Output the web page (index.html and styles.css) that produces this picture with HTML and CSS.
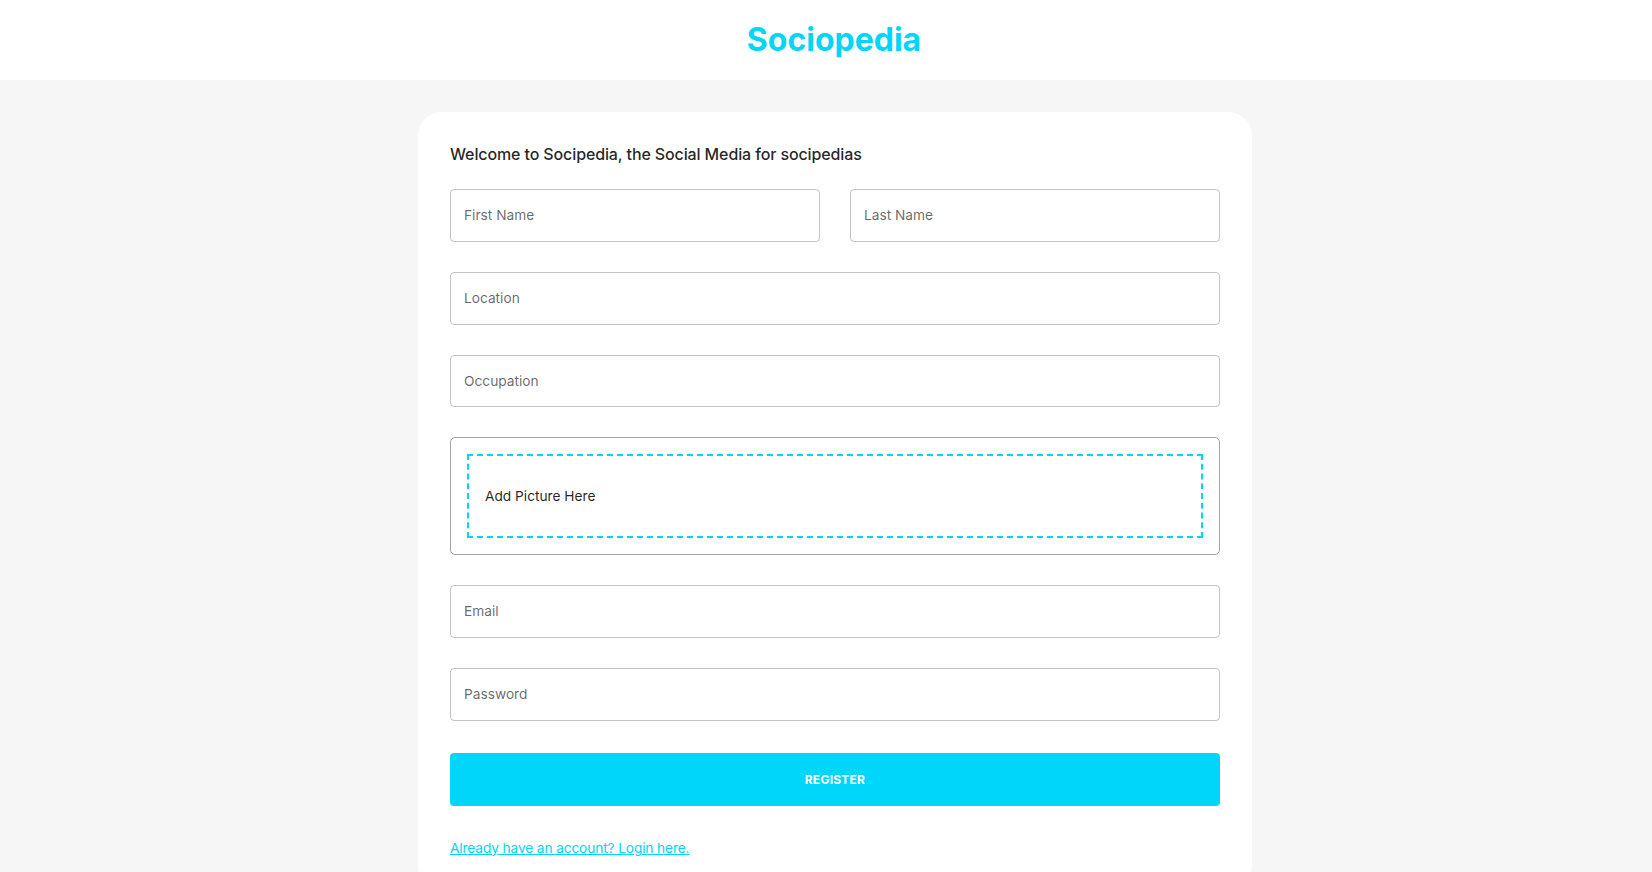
FILE: index.html
```html
<!DOCTYPE html>
<html lang="en">
<head>
<meta charset="utf-8">
<title>Sociopedia</title>
<link rel="stylesheet" href="styles.css">
</head>
<body>
<header class="topbar">
  <div class="brand">Sociopedia</div>
</header>
<main class="main">
  <section class="card">
    <h5 class="welcome">Welcome to Socipedia, the Social Media for socipedias</h5>
    <form class="form">
      <div class="field half"><span class="label">First Name</span></div>
      <div class="field half"><span class="label">Last Name</span></div>
      <div class="field full"><span class="label">Location</span></div>
      <div class="field full"><span class="label">Occupation</span></div>
      <div class="picture full">
        <div class="dropzone"><p>Add Picture Here</p></div>
      </div>
      <div class="field full"><span class="label">Email</span></div>
      <div class="field full"><span class="label">Password</span></div>
    </form>
    <button class="register" type="button">Register</button>
    <p class="switch"><a href="#">Already have an account? Login here.</a></p>
  </section>
</main>
</body>
</html>
```
FILE: styles.css
```css
* { box-sizing: border-box; }
html, body { margin: 0; padding: 0; }
body {
  background: #F6F6F6;
  font-family: "Inter", "Roboto", sans-serif;
  color: rgba(0, 0, 0, 0.87);
  font-size: 13.71px;
  line-height: 1.5;
  overflow: hidden;
}
.topbar {
  background: #FFFFFF;
  padding: 16px 6% 16px calc(6% + 16px);
  text-align: center;
}
.brand {
  font-size: 32px;
  font-weight: 700;
  line-height: 48px;
  color: #00D5FA;
}
.main {
  padding-left: 18px;
}
.card {
  width: 834px;
  margin: 32px auto;
  padding: 32px;
  background: #FFFFFF;
  border-radius: 24px;
}
.welcome {
  margin: 0 0 24px;
  font-size: 16px;
  font-weight: 500;
  line-height: 1.334;
  letter-spacing: -0.12px;
  color: rgba(0, 0, 0, 0.87);
}
.form {
  display: grid;
  grid-template-columns: repeat(4, minmax(0, 1fr));
  gap: 30px;
}
.half { grid-column: span 2; }
.full { grid-column: span 4; }
.field {
  height: 52.7px;
  border: 1px solid rgba(0, 0, 0, 0.23);
  border-radius: 4px;
  display: flex;
  align-items: center;
  padding: 0 13px;
}
.label {
  color: rgba(0, 0, 0, 0.6);
  font-size: 13.71px;
}
.picture {
  border: 1px solid #A3A3A3;
  border-radius: 5px;
  padding: 16px;
}
.dropzone {
  border: 2px dashed #00D5FA;
  padding: 0 16px;
}
.dropzone p {
  margin: 0;
  padding: 29.7px 0;
  line-height: 20.6px;
}
.register {
  display: block;
  width: 100%;
  margin: 32px 0;
  padding: 16px;
  border: 0;
  border-radius: 4px;
  background: #00D5FA;
  color: #FFFFFF;
  font-family: inherit;
  font-size: 12px;
  font-weight: 700;
  line-height: 21px;
  text-transform: uppercase;
  letter-spacing: 0.02em;
}
.switch {
  margin: 0;
  line-height: 20.6px;
  letter-spacing: -0.12px;
}
.switch a {
  color: #00D5FA;
  text-decoration: underline;
}
```
